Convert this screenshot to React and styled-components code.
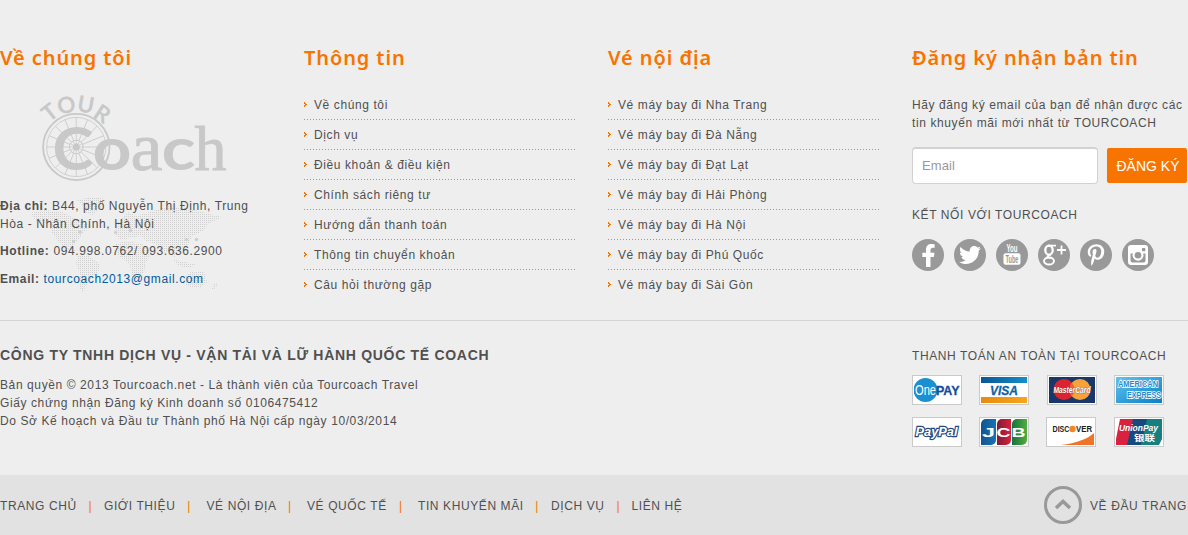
import React from "react";
import styled, { createGlobalStyle } from "styled-components";
import { FaFacebookF, FaTwitter, FaPinterestP } from "react-icons/fa";

const Global = createGlobalStyle`
  *, *::before, *::after { box-sizing: border-box; }
  body {
    margin: 0;
    background: #eeeeee;
    color: #505050;
    font: 12px/18px "Liberation Sans", Arial, sans-serif;
    letter-spacing: 0.6px;
  }
  p, h2, h3, h4, ul { margin: 0; padding: 0; font-weight: normal; }
  a { color: inherit; text-decoration: none; }
`;

const Footer = styled.footer`
  width: 1188px;
  height: 535px;
  overflow: hidden;
`;

const Columns = styled.div`
  display: grid;
  grid-template-columns: 273px 273px 273px 276px;
  column-gap: 31px;
  height: 321px;
  padding-top: 43px;
  border-bottom: 1px solid #d4d4d4;
`;

const Heading = styled.h2`
  height: 47px;
  font: 600 20px/30px "Noto Sans", "Open Sans", sans-serif;
  letter-spacing: 0.9px;
  color: #f77400;
  white-space: nowrap;
`;

const LogoBox = styled.div`
  display: flex;
  height: 107px;
  padding: 2px 0 0 36px;
`;

const Contact = styled.address`
  position: relative;
  font-style: normal;
  white-space: nowrap;
`;

const WorldMap = styled.svg`
  position: absolute;
  left: 24px;
  top: -5px;
`;

const Line = styled.p`
  position: relative;
  margin-bottom: ${(p) => p.$gap || 9}px;
`;

const Mail = styled.a`
  && { color: #005b9f; }
`;

const LinkList = styled.ul`
  list-style: none;
`;

const LinkItem = styled.li`
  display: flex;
  align-items: center;
  gap: 6px;
  height: 30px;
  background: ${(p) =>
    p.$last
      ? "none"
      : "repeating-linear-gradient(90deg, #999 0 1px, transparent 1px 3px) left bottom / 100% 1px no-repeat"};
`;

const Intro = styled.p`
  padding-top: 6px;
  white-space: nowrap;
`;

const Form = styled.form`
  display: flex;
  gap: 9px;
  margin-top: 15px;
`;

const Input = styled.input`
  width: 186px;
  height: 37px;
  padding: 0 9px 2px;
  border: 1px solid #d2d2d2;
  border-top-width: 2px;
  border-radius: 4px;
  background: #fff;
  font: 13px "Liberation Sans", Arial, sans-serif;
  letter-spacing: 0.1px;
  &::placeholder { color: #999; opacity: 1; }
`;

const Submit = styled.button`
  width: 80px;
  height: 35px;
  margin-top: 1px;
  padding: 1px 0 0 2px;
  border: 0;
  border-radius: 2px;
  background: #f77400;
  color: #fff;
  font: 14px "Liberation Sans", Arial, sans-serif;
  white-space: nowrap;
`;

const SmallTitle = styled.h4`
  margin-top: ${(p) => p.$top || 0}px;
  font-size: 12px;
  line-height: 18px;
  white-space: nowrap;
`;

const Socials = styled.div`
  display: flex;
  gap: 10px;
  margin-top: 15px;
`;

const Social = styled.a`
  display: flex;
  align-items: center;
  justify-content: center;
  width: 32px;
  height: 32px;
  border-radius: 50%;
  background: #999;
  && { color: #fff; }
  svg { display: block; }
`;

const Company = styled.section`
  display: grid;
  grid-template-columns: 912px 276px;
  height: 154px;
  padding-top: 25px;
`;

const CompanyName = styled.h3`
  padding-bottom: 12px;
  font-size: 14px;
  font-weight: bold;
  letter-spacing: 0.7px;
`;

const Cards = styled.div`
  display: grid;
  grid-template-columns: repeat(4, 50px);
  gap: 12px 17.3px;
  margin-top: 10px;
`;

const CardFrame = styled.div`
  width: 50px;
  height: 30px;
  margin-left: ${(p) => (p.$nudge ? -1 : 0)}px;
  padding: 1px;
  border: 1px solid #cacaca;
  background: #fff;
  svg { display: block; letter-spacing: 0; }
`;

const BottomBar = styled.div`
  display: flex;
  justify-content: space-between;
  height: 60px;
  padding-right: 1px;
  background: #e2e2e2;
`;

const Nav = styled.nav`
  display: flex;
  align-items: center;
  height: 61px;
  white-space: nowrap;
`;

const NavLink = styled.a`
  width: ${(p) => p.$width}px;
`;

const Bar = styled.span`
  width: ${(p) => p.$width}px;
  color: #f77400;
`;

const TopLink = styled.a`
  display: flex;
  align-items: center;
  gap: 8px;
  white-space: nowrap;
`;

const TopLabel = styled.span`
  padding-top: 2px;
`;

const Logo = () => (
  <svg width="196" height="92" viewBox="36 92 196 92" fill="#c8c8c8" letterSpacing="0" overflow="visible">
    <g fill="none" stroke="#c8c8c8">
      <circle cx="76.3" cy="147" r="33.2" strokeWidth="1.8" />
      <circle cx="76.3" cy="147" r="29.6" strokeWidth="0.8" />
      <circle cx="76.3" cy="147" r="6.8" strokeWidth="1" />
      {Array.from({ length: 16 }, (_, i) => (
        <line key={i} x1="76.3" y1="140" x2="76.3" y2="117.4" strokeWidth="0.8" transform={`rotate(${i * 22.5} 76.3 147)`} />
      ))}
      {Array.from({ length: 12 }, (_, i) => (
        <line key={i} x1="76.3" y1="144" x2="76.3" y2="140" strokeWidth="0.7" transform={`rotate(${i * 30} 76.3 147)`} />
      ))}
    </g>
    <circle cx="76.3" cy="147" r="3.5" />
    <g fontFamily="Lato, sans-serif" fontWeight="700" fontSize="22.5" textAnchor="middle">
      <text transform="translate(54.5 118.5) rotate(-38)">T</text>
      <text transform="translate(67.8 113) rotate(-10)">O</text>
      <text transform="translate(84.6 112.5) rotate(10)">U</text>
      <text transform="translate(98 120.5) rotate(33)">R</text>
    </g>
    <g fontFamily="Lato, sans-serif" fontWeight="700" fontSize="60">
      <text x="52.5" y="169.5" textLength="41" lengthAdjust="spacingAndGlyphs">C</text>
      <text x="92.5" y="169.5" textLength="39" lengthAdjust="spacingAndGlyphs">o</text>
      <text x="161.5" y="169.5" textLength="34" lengthAdjust="spacingAndGlyphs">c</text>
    </g>
    <g fontFamily="'Liberation Serif', serif" stroke="#c8c8c8" strokeWidth="0.8">
      <text x="130.5" y="169.5" fontSize="67" textLength="32" lengthAdjust="spacingAndGlyphs">a</text>
      <text x="194.5" y="169.5" fontSize="64" textLength="32" lengthAdjust="spacingAndGlyphs">h</text>
    </g>
  </svg>
);

const MapDots = () => (
  <WorldMap width="204" height="106" viewBox="24 192 204 106">
    <defs>
      <pattern id="dots" width="2" height="2" patternUnits="userSpaceOnUse">
        <rect width="1" height="1" fill="#cfcfcf" />
      </pattern>
    </defs>
    <g fill="url(#dots)">
      <path d="M30 213L45 210L62 212L72 217L82 222L92 226L84 232L78 240L72 247L78 252L70 250L60 243L52 233L48 223L36 221Z" />
      <path d="M76 200L92 197L106 199L101 208L92 215L86 213L82 204Z" />
      <path d="M78 256L86 254L100 264L98 272L90 280L85 287L83 293L79 286L80 274L76 263Z" />
      <path d="M114 232L118 222L128 212L136 216L150 212L168 206L190 209L222 217L208 224L203 231L192 236L188 246L180 249L175 258L171 249L162 254L156 244L146 241L140 236L130 238L120 240Z" />
      <path d="M116 244L126 241L142 244L152 252L146 262L144 272L137 280L132 276L130 264L118 256Z" />
      <path d="M172 259L184 262L196 264L190 268L178 266Z" />
      <path d="M184 278L192 271L204 272L207 282L200 288L186 286Z" />
      <path d="M214 284L218 282L216 288L211 290Z" />
    </g>
    <g fill="#cfcfcf">
      <circle cx="80" cy="232" r="1.8" />
      <circle cx="73.5" cy="241.5" r="1.6" />
      <circle cx="115.5" cy="232.5" r="1.6" />
      <circle cx="130.5" cy="230.5" r="1.8" />
      <circle cx="186.5" cy="239.5" r="1.6" />
      <circle cx="196.5" cy="239.5" r="1.8" />
    </g>
  </WorldMap>
);

const Arrow = () => (
  <svg width="4" height="6" viewBox="0 0 4 6" shapeRendering="crispEdges" fill="#f77400">
    <rect x="0" y="0" width="1" height="1" />
    <rect x="0" y="1" width="2" height="1" />
    <rect x="1" y="2" width="2" height="1" />
    <rect x="0" y="3" width="2" height="1" />
    <rect x="0" y="4" width="1" height="1" />
  </svg>
);

const Links = ({ items }) => (
  <LinkList>
    {items.map((t, i) => (
      <LinkItem key={t} $last={i === items.length - 1}>
        <Arrow />
        <a href="#">{t}</a>
      </LinkItem>
    ))}
  </LinkList>
);

const YouTube = () => (
  <svg width="20" height="24" viewBox="0 0 20 24" letterSpacing="0" fontFamily="'Liberation Sans', sans-serif" fontWeight="bold">
    <text x="4.5" y="9.3" fontSize="10" fill="#fff" textLength="11" lengthAdjust="spacingAndGlyphs">You</text>
    <rect x="1.5" y="10.2" width="17" height="11.5" rx="2" fill="#fff" />
    <text x="3.5" y="19.5" fontSize="10" fill="#999" textLength="13" lengthAdjust="spacingAndGlyphs">Tube</text>
  </svg>
);

const GooglePlus = () => (
  <svg width="26" height="26" viewBox="0 0 26 26" fill="none" stroke="#fff" strokeWidth="1.9">
    <ellipse cx="8" cy="8.2" rx="3.7" ry="4.5" strokeWidth="2.3" />
    <path d="M7 3.6h8M10 12.5c-5 1-4 3 0 3.5" />
    <ellipse cx="8" cy="19" rx="5" ry="3.5" />
    <path d="M20.5 3.5v9M16 8h9" strokeWidth="1.8" />
  </svg>
);

const Instagram = () => (
  <svg width="20" height="20" viewBox="0 0 20 20">
    <rect width="20" height="20" rx="3" fill="#fff" />
    <path d="M2.5 8.5h3a5 5 0 0 0 9 0h3v7a2 2 0 0 1-2 2h-11a2 2 0 0 1-2-2z" fill="#999" />
    <rect x="14" y="3" width="3.3" height="3.3" rx="0.6" fill="#999" />
    <circle cx="10" cy="10.2" r="5.5" fill="#fff" />
    <circle cx="10" cy="10.2" r="3.3" fill="#999" />
  </svg>
);

const Card = ({ children, nudge }) => (
  <CardFrame $nudge={nudge}>
    <svg width="46" height="26" viewBox="0 0 46 26" fontFamily="'Liberation Sans', sans-serif" fontWeight="bold">
      {children}
    </svg>
  </CardFrame>
);

const PaymentCards = () => (
  <Cards>
    <Card>
      <circle cx="11.5" cy="13" r="12" fill="#1b8fd2" />
      <text x="1" y="18" fontSize="15" fontWeight="normal" fill="#fff" textLength="21" lengthAdjust="spacingAndGlyphs">One</text>
      <text x="22" y="18" fontSize="13.5" fill="#164b9c" stroke="#164b9c" strokeWidth="0.3" textLength="23.5" lengthAdjust="spacingAndGlyphs">PAY</text>
    </Card>
    <Card>
      <defs>
        <linearGradient id="visaTop" x2="1" y2="0"><stop stopColor="#0b5795" /><stop offset="1" stopColor="#168dcb" /></linearGradient>
        <linearGradient id="visaBottom" x2="1" y2="0"><stop stopColor="#e58b12" /><stop offset="1" stopColor="#f8a51c" /></linearGradient>
      </defs>
      <rect width="46" height="6" fill="url(#visaTop)" />
      <rect y="20" width="46" height="6" fill="url(#visaBottom)" />
      <text x="9" y="18" fontSize="13.5" fontStyle="italic" fill="#0d62a5" stroke="#0d62a5" strokeWidth="0.3" textLength="28" lengthAdjust="spacingAndGlyphs">VISA</text>
    </Card>
    <Card>
      <rect width="46" height="26" fill="#1a3769" />
      <circle cx="15" cy="12.5" r="10.5" fill="#dc2430" />
      <circle cx="31" cy="12.5" r="10.5" fill="#f5a33a" />
      <path d="M23 5.7a10.5 10.5 0 0 1 0 13.6a10.5 10.5 0 0 1 0-13.6" fill="#e9652e" />
      <text x="4.5" y="16" fontSize="9" fontStyle="italic" fill="#fff" stroke="#7a2431" strokeWidth="0.5" paintOrder="stroke" textLength="37" lengthAdjust="spacingAndGlyphs">MasterCard</text>
    </Card>
    <Card>
      <defs><linearGradient id="amex" x2="1" y2="1"><stop stopColor="#63c3ef" /><stop offset="1" stopColor="#087fc6" /></linearGradient></defs>
      <rect width="46" height="26" fill="url(#amex)" />
      <g fill="#2489cc" stroke="#fff" strokeWidth="1.6" paintOrder="stroke" fontSize="9">
        <text x="2" y="10" textLength="40" lengthAdjust="spacingAndGlyphs">AMERICAN</text>
        <text x="11" y="20.5" textLength="34" lengthAdjust="spacingAndGlyphs">EXPRESS</text>
      </g>
    </Card>
    <Card>
      <text x="1.5" y="17" fontSize="13" fontStyle="italic" fill="#fff" stroke="#254a7e" strokeWidth="2.4" paintOrder="stroke" textLength="42" lengthAdjust="spacingAndGlyphs">PayPal</text>
    </Card>
    <Card>
      <defs>
        <linearGradient id="jcbBlue" x2="1" y2="0"><stop stopColor="#13538f" /><stop offset="1" stopColor="#1673b5" /></linearGradient>
        <linearGradient id="jcbRed" x2="1" y2="0"><stop stopColor="#7e1c35" /><stop offset="1" stopColor="#dc1f3d" /></linearGradient>
        <linearGradient id="jcbGreen" x2="1" y2="0"><stop stopColor="#167340" /><stop offset="1" stopColor="#4fae3d" /></linearGradient>
      </defs>
      <path d="M0 26V5a5 5 0 0 1 5-5h10v21a5 5 0 0 1-5 5z" fill="url(#jcbBlue)" />
      <path d="M16 26V5a5 5 0 0 1 5-5h9v21a5 5 0 0 1-5 5z" fill="url(#jcbRed)" />
      <path d="M31 26V5a5 5 0 0 1 5-5h10v21a5 5 0 0 1-5 5z" fill="url(#jcbGreen)" />
      <g fill="#fff" fontSize="12">
        <text x="1" y="17.5" textLength="13" lengthAdjust="spacingAndGlyphs">J</text>
        <text x="15.5" y="17.5" textLength="14" lengthAdjust="spacingAndGlyphs">C</text>
        <text x="30.5" y="17.5" textLength="14" lengthAdjust="spacingAndGlyphs">B</text>
      </g>
    </Card>
    <Card nudge>
      <path d="M13 26Q36 23 46 14V26Z" fill="#ee742a" />
      <text x="4.5" y="13" fontSize="8.5" fill="#222" textLength="17" lengthAdjust="spacingAndGlyphs">DISC</text>
      <circle cx="24.5" cy="10" r="3.2" fill="#f08529" />
      <text x="28" y="13" fontSize="8.5" fill="#222" textLength="16" lengthAdjust="spacingAndGlyphs">VER</text>
    </Card>
    <Card>
      <path d="M4 0H20L15 26H0V20Z" fill="#da2140" />
      <path d="M17 0H34L28 26H11Z" fill="#174a7c" />
      <path d="M31 0H46V20L43 26H25Z" fill="#168080" />
      <text x="3" y="11.5" fontSize="9.5" fontStyle="italic" fill="#fff" textLength="39" lengthAdjust="spacingAndGlyphs">UnionPay</text>
      <text x="18" y="21.5" fontSize="8.5" fill="#fff" fontFamily="'Noto Sans CJK SC', sans-serif" textLength="21" lengthAdjust="spacingAndGlyphs">银联</text>
    </Card>
  </Cards>
);

const info = ["Về chúng tôi", "Dịch vụ", "Điều khoản & điều kiện", "Chính sách riêng tư", "Hướng dẫn thanh toán", "Thông tin chuyển khoản", "Câu hỏi thường gặp"];
const places = ["Nha Trang", "Đà Nẵng", "Đạt Lạt", "Hải Phòng", "Hà Nội", "Phú Quốc", "Sài Gòn"];
const tickets = places.map((p) => "Vé máy bay đi " + p);

const nav = [
  { label: "TRANG CHỦ", width: 88.5, bar: 15.5 },
  { label: "GIỚI THIỆU", width: 83.3, bar: 19.2 },
  { label: "VÉ NỘI ĐỊA", width: 81.5, bar: 19 },
  { label: "VÉ QUỐC TẾ", width: 92, bar: 19 },
  { label: "TIN KHUYẾN MÃI", width: 117.3, bar: 15.7 },
  { label: "DỊCH VỤ", width: 65.5, bar: 15 },
  { label: "LIÊN HỆ", width: 60 },
];

export default function App() {
  return (
    <Footer>
      <Global />
      <Columns>
        <section>
          <Heading>Về chúng tôi</Heading>
          <LogoBox><Logo /></LogoBox>
          <Contact>
            <MapDots />
            <Line><b>Địa chỉ:</b> B44, phố Nguyễn Thị Định, Trung<br />Hòa - Nhân Chính, Hà Nội</Line>
            <Line $gap={10}><b>Hotline:</b> 094.998.0762/ 093.636.2900</Line>
            <Line><b>Email:</b> <Mail href="#">tourcoach2013@gmail.com</Mail></Line>
          </Contact>
        </section>
        <section>
          <Heading>Thông tin</Heading>
          <Links items={info} />
        </section>
        <section>
          <Heading>Vé nội địa</Heading>
          <Links items={tickets} />
        </section>
        <section>
          <Heading>Đăng ký nhận bản tin</Heading>
          <Intro>Hãy đăng ký email của bạn để nhận được các<br />tin khuyến mãi mới nhất từ TOURCOACH</Intro>
          <Form>
            <Input placeholder="Email" />
            <Submit type="button">ĐĂNG KÝ</Submit>
          </Form>
          <SmallTitle $top={22}>KẾT NỐI VỚI TOURCOACH</SmallTitle>
          <Socials>
            <Social href="#"><FaFacebookF size={23} /></Social>
            <Social href="#"><FaTwitter size={22} /></Social>
            <Social href="#"><YouTube /></Social>
            <Social href="#"><GooglePlus /></Social>
            <Social href="#"><FaPinterestP size={22} /></Social>
            <Social href="#"><Instagram /></Social>
          </Socials>
        </section>
      </Columns>
      <Company>
        <div>
          <CompanyName>CÔNG TY TNHH DỊCH VỤ - VẬN TẢI VÀ LỮ HÀNH QUỐC TẾ COACH</CompanyName>
          <p>Bản quyền © 2013 Tourcoach.net - Là thành viên của Tourcoach Travel</p>
          <p>Giấy chứng nhận Đăng ký Kinh doanh số 0106475412</p>
          <p>Do Sở Kế hoạch và Đầu tư Thành phố Hà Nội cấp ngày 10/03/2014</p>
        </div>
        <div>
          <SmallTitle $top={1}>THANH TOÁN AN TOÀN TẠI TOURCOACH</SmallTitle>
          <PaymentCards />
        </div>
      </Company>
      <BottomBar>
        <Nav>
          {nav.map((n) => (
            <React.Fragment key={n.label}>
              <NavLink href="#" $width={n.width}>{n.label}</NavLink>
              {n.bar && <Bar $width={n.bar}>|</Bar>}
            </React.Fragment>
          ))}
        </Nav>
        <TopLink href="#">
          <svg width="38" height="38" viewBox="0 0 38 38" fill="none" stroke="#999">
            <circle cx="19" cy="19" r="17.5" strokeWidth="3" />
            <path d="M12 22L19 15.5L26 22" strokeWidth="3.5" />
          </svg>
          <TopLabel>VỀ ĐẦU TRANG</TopLabel>
        </TopLink>
      </BottomBar>
    </Footer>
  );
}
